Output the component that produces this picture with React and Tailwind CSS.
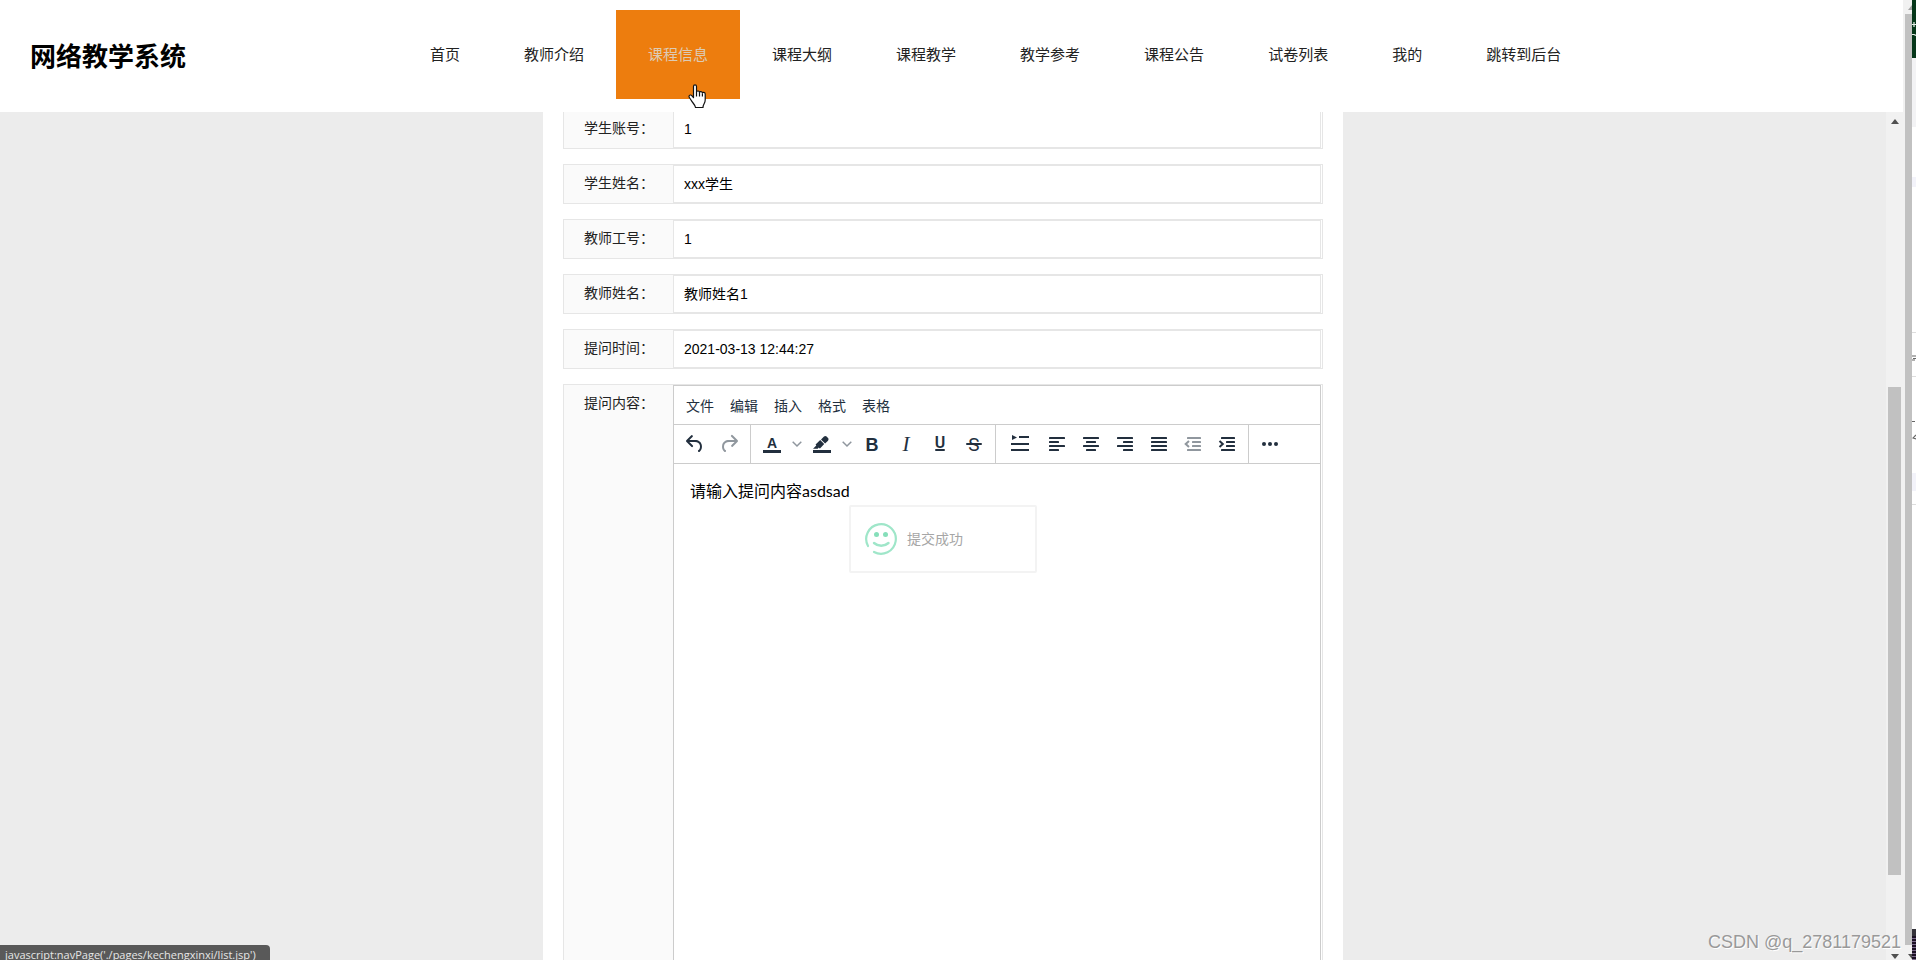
import { useState } from 'react';

const NAV = [
  '首页', '教师介绍', '课程信息', '课程大纲', '课程教学',
  '教学参考', '课程公告', '试卷列表', '我的', '跳转到后台',
];

const FIELDS = [
  { id: 'xueshengzhanghao', label: '学生账号：', value: '1' },
  { id: 'xueshengxingming', label: '学生姓名：', value: 'xxx学生' },
  { id: 'jiaoshigonghao',   label: '教师工号：', value: '1' },
  { id: 'jiaoshixingming',  label: '教师姓名：', value: '教师姓名1' },
  { id: 'tiwenshijian',     label: '提问时间：', value: '2021-03-13 12:44:27' },
];

const MENUS = ['文件', '编辑', '插入', '格式', '表格'];

/* Toolbar icons, all on a 24x24 grid */
function Icon({ children }) {
  return (
    <svg width="24" height="24" viewBox="0 0 24 24" fill="currentColor" aria-hidden="true">
      {children}
    </svg>
  );
}

// rows of [x, width], spaced 4 apart
function Lines({ rows }) {
  return rows.map(([x, w], i) => (
    <rect key={i} x={x} y={5 + i * 4} width={w} height="2" rx="0.6" />
  ));
}

const UndoIcon = () => (
  <Icon>
    <path d="M6.4 8H12c3.7 0 6.2 2 6.8 5.1.6 2.7-.4 5.6-2.3 6.8a1 1 0 0 1-1-1.8c1.1-.6 1.8-2.7 1.4-4.6-.5-2.1-2.1-3.5-4.9-3.5H6.4l3.3 3.3a1 1 0 1 1-1.4 1.4l-5-5a1 1 0 0 1 0-1.4l5-5a1 1 0 0 1 1.4 1.4L6.4 8z" />
  </Icon>
);

const RedoIcon = () => (
  <Icon>
    <path d="M17.6 10H12c-2.8 0-4.4 1.4-4.9 3.5-.4 2 .3 4 1.4 4.6a1 1 0 1 1-1 1.8c-2-1.2-2.9-4.1-2.3-6.8.6-3 3-5.1 6.8-5.1h5.6l-3.3-3.3a1 1 0 1 1 1.4-1.4l5 5a1 1 0 0 1 0 1.4l-5 5a1 1 0 0 1-1.4-1.4l3.3-3.3z" />
  </Icon>
);

const ColorIcon = () => (
  <Icon>
    <text x="12" y="16" textAnchor="middle" fontSize="14" fontWeight="700" fontFamily="Liberation Sans, sans-serif">A</text>
    <rect x="3" y="18" width="18" height="3" />
  </Icon>
);

const HighlightIcon = () => (
  <Icon>
    <rect x="3" y="18" width="18" height="3" />
    <path d="M7.7 16.7H3l3.3-3.3-.7-.8L10.2 8l4 4.1-4 4.2c-.2.2-.6.2-.8 0l-.6-.7-1.1 1.1zm5-7.5L11 7.4l3-2.9a2 2 0 0 1 2.6 0L18 6c.7.7.7 2 0 2.7l-2.9 2.9-1.8-1.8-.5-.6" />
  </Icon>
);

const BoldIcon = () => (
  <Icon>
    <text x="12" y="19" textAnchor="middle" fontSize="18" fontWeight="700" fontFamily="Liberation Sans, sans-serif">B</text>
  </Icon>
);

const ItalicIcon = () => (
  <Icon>
    <text x="12" y="19" textAnchor="middle" fontSize="21" fontStyle="italic" fontFamily="Liberation Serif, serif">I</text>
  </Icon>
);

const UnderlineIcon = () => (
  <Icon>
    <text x="12" y="16" textAnchor="middle" fontSize="16" fontWeight="600" fontFamily="Roboto, sans-serif">U</text>
    <rect x="7" y="17" width="10" height="2" rx="1" />
  </Icon>
);

const StrikeIcon = () => (
  <Icon>
    <text x="12" y="19" textAnchor="middle" fontSize="19" fontWeight="400" fontFamily="Roboto, sans-serif">S</text>
    <rect x="4" y="11" width="16" height="2" rx="1" />
  </Icon>
);

const FirstLineIcon = () => (
  <Icon>
    <path d="M4 3l5 2.5L4 8z" />
    <rect x="11" y="4" width="10" height="2" />
    <rect x="3" y="11" width="18" height="2" />
    <rect x="3" y="17" width="18" height="2" />
  </Icon>
);

const LeftIcon = () => <Icon><Lines rows={[[4, 16], [4, 10], [4, 16], [4, 10]]} /></Icon>;
const CenterIcon = () => <Icon><Lines rows={[[4, 16], [7, 10], [4, 16], [7, 10]]} /></Icon>;
const RightIcon = () => <Icon><Lines rows={[[4, 16], [10, 10], [4, 16], [10, 10]]} /></Icon>;
const JustifyIcon = () => <Icon><Lines rows={[[4, 16], [4, 16], [4, 16], [4, 16]]} /></Icon>;

const OutdentIcon = () => (
  <Icon>
    <Lines rows={[[6, 14], [11, 9], [11, 9], [6, 14]]} />
    <path d="M8 9l-3.3 3L8 15" fill="none" stroke="currentColor" strokeWidth="2" />
  </Icon>
);

const IndentIcon = () => (
  <Icon>
    <Lines rows={[[6, 14], [11, 9], [11, 9], [6, 14]]} />
    <path d="M4.5 9l3.3 3-3.3 3" fill="none" stroke="currentColor" strokeWidth="2" />
  </Icon>
);

const MoreIcon = () => (
  <Icon>
    <circle cx="6" cy="12" r="2" />
    <circle cx="12" cy="12" r="2" />
    <circle cx="18" cy="12" r="2" />
  </Icon>
);

const GROUPS = [
  [
    { label: '撤销', icon: UndoIcon },
    { label: '重做', icon: RedoIcon, disabled: true },
  ],
  [
    { label: '文字颜色', icon: ColorIcon, split: true },
    { label: '背景颜色', icon: HighlightIcon, split: true },
    { label: '粗体', icon: BoldIcon },
    { label: '斜体', icon: ItalicIcon },
    { label: '下划线', icon: UnderlineIcon },
    { label: '删除线', icon: StrikeIcon },
  ],
  [
    { label: '首行缩进', icon: FirstLineIcon, wide: true },
    { label: '左对齐', icon: LeftIcon },
    { label: '居中', icon: CenterIcon },
    { label: '右对齐', icon: RightIcon },
    { label: '两端对齐', icon: JustifyIcon },
    { label: '减少缩进', icon: OutdentIcon, disabled: true },
    { label: '增加缩进', icon: IndentIcon },
  ],
  [{ label: '更多', icon: MoreIcon }],
];

function ToolButton({ label, icon: Glyph, disabled, split, wide }) {
  return (
    <>
      <button
        type="button"
        aria-label={label}
        disabled={disabled}
        className={`flex h-[34px] items-center justify-center text-[#222f3e] disabled:text-[#222f3e]/50
          ${wide ? 'w-10' : 'w-[34px]'}`}
      >
        <Glyph />
      </button>
      {split && (
        <button type="button" aria-label={`${label}选项`} className="flex h-[34px] w-4 items-center justify-center text-[#8f969e]">
          <svg width="10" height="10" viewBox="0 0 10 10" fill="none" stroke="currentColor" strokeWidth="1.5" aria-hidden="true">
            <path d="M0.7 2.7L5 7l4.3-4.3" />
          </svg>
        </button>
      )}
    </>
  );
}

function Editor() {
  return (
    <div className="flex h-[800px] flex-1 flex-col border border-[#ccc] bg-white">
      <div className="flex h-[39px] shrink-0 items-center gap-4 border-b border-[#ccc] px-3 pt-px text-sm text-[#222f3e]">
        {MENUS.map((m) => (
          <button key={m} type="button">{m}</button>
        ))}
      </div>
      <div className="flex h-[39px] shrink-0 border-b border-[#ccc]">
        {GROUPS.map((group, i) => (
          <div key={i} className="flex items-center border-r border-[#ccc] px-1 last:border-r-0">
            {group.map((b) => <ToolButton key={b.label} {...b} />)}
          </div>
        ))}
      </div>
      <textarea
        id="tiwenneirong"
        defaultValue="请输入提问内容asdsad"
        className="w-full flex-1 resize-none px-4 py-[15px] font-[Lato,'Noto_Sans_CJK_SC',sans-serif] text-base text-black outline-none"
      />
    </div>
  );
}

function Toast() {
  return (
    <div role="status" className="absolute top-[393px] left-1/2 flex h-[68px] w-[188px] -translate-x-1/2 items-center gap-2.5 rounded-xs border-2 border-[#f3f3f3] bg-white px-3.5">
      <svg width="32" height="32" viewBox="0 0 32 32" fill="none" stroke="#9fe6c9" strokeLinecap="round" aria-hidden="true">
        <path d="M3 23A14.800 14.800 0 1 1 9 29" strokeWidth="2.200" />
        <circle cx="11.5" cy="11.5" r="2.5" fill="#86dfba" stroke="none" />
        <circle cx="20.5" cy="11.5" r="2.5" fill="#86dfba" stroke="none" />
        <path d="M9 20c4 3.600 10.500 3.600 14.500 0" strokeWidth="2.400" />
      </svg>
      <span className="text-sm text-[#a6a6a6]">提交成功</span>
    </div>
  );
}

function ScrollArrow({ down, className = '' }) {
  return (
    <svg width="8" height="5" viewBox="0 0 8 5" className={`shrink-0 ${className}`} aria-hidden="true">
      <path d={down ? 'M0 0h8L4 5z' : 'M0 5h8L4 0z'} fill="currentColor" />
    </svg>
  );
}

function HandCursor() {
  return (
    <svg width="19" height="25" viewBox="0 0 19 25" aria-hidden="true">
      <path
        d="M5.500 2.500c0-2.200 3-2.200 3 0v5.500c.3-1.500 3-1.300 3 .4.400-1.300 2.900-1.100 2.900.7.400-1.200 2.800-.9 2.800.9V16c0 3.500-2.200 4-2.200 7.500H7.500c0-2.500-3-4.500-4.500-7.500-.8-1.500-2-2.500-2-3.600 0-1.600 2-1.900 3-.6l1.500 1.900z"
        fill="#fff" stroke="#111" strokeWidth="1.200" strokeLinejoin="round"
      />
      <path d="M8.500 8v4.500M11.500 8.500v4M14.400 9.500v3" stroke="#111" strokeWidth="1.200" fill="none" />
    </svg>
  );
}

/* Sliver of the window that sits behind the browser */
function BackWindow() {
  return (
    <div className="flex w-1 shrink-0 flex-col bg-white" aria-hidden="true">
      <svg width="4" height="58" viewBox="0 0 4 58" className="shrink-0">
        <rect width="4" height="58" fill="#06371a" />
        <path d="M0 24.500h4M2 22v5M0 34.500h2l2 1" stroke="#e8f0ea" strokeWidth="1.200" fill="none" />
      </svg>
      <div className="h-[69px] shrink-0 bg-[#f3f3f5]" />
      <div className="h-[50px] shrink-0" />
      <div className="h-[10px] shrink-0 bg-[#f3f3fa]" />
      <svg width="4" height="320" viewBox="0 0 4 320" className="shrink-0">
        <path d="M0 145.500h4M0 189.500h4M0 317.500h4" stroke="#ddd" />
        <path d="M0 169h4M1 171.500h3M0 173h3M0 234.500h3M4 248l-3 3 3 1" stroke="#666" strokeWidth="1.200" fill="none" />
        <rect y="286" width="4" height="18" fill="#f3f3fa" />
      </svg>
      <div className="flex-1" />
      <div className="h-[7px] shrink-0 bg-[#35333b]" />
      <div className="h-6 shrink-0 bg-[repeating-linear-gradient(#1b1024_0_2px,#7b6a8c_2px_3px)]" />
    </div>
  );
}

export default function App() {
  const [active, setActive] = useState('课程信息');

  return (
    <div className="relative flex h-screen overflow-hidden bg-white font-['Liberation_Sans','Noto_Sans_CJK_SC',sans-serif]">
      <div className="flex min-w-0 flex-1 flex-col">
        <header className="relative z-10 flex h-28 shrink-0 items-center bg-white pl-[30px]">
          <h1 className="pt-0.5 text-[26px] font-bold whitespace-nowrap text-black">网络教学系统</h1>
          <nav className="ml-[212px] flex self-start pt-[10px]">
            {NAV.map((item) => (
              <div key={item} className="relative">
                <a
                  href="#"
                  onClick={() => setActive(item)}
                  className={`flex h-[89px] items-center px-8 pt-0.5 text-[15px] whitespace-nowrap
                    ${item === active ? 'bg-[#ed7d0e] text-[#dccbb5]' : 'text-[#222]'}`}
                >
                  {item}
                </a>
                {item === '课程信息' && (
                  <div className="pointer-events-none absolute top-[74px] left-[72px] z-10">
                    <HandCursor />
                  </div>
                )}
              </div>
            ))}
          </nav>
        </header>

        <div className="flex min-h-0 flex-1">
          <main className="relative min-w-0 flex-1 overflow-hidden bg-[#ececec]">
            <form className="mx-auto -mt-[3px] flex w-[800px] flex-col gap-[15px] bg-white px-5">
              {FIELDS.map((f) => (
                <div key={f.id} className="flex h-10 border border-[#e6e6e6] pr-px">
                  <label htmlFor={f.id} className="w-[109px] shrink-0 bg-[#fafafa] pl-5 text-sm leading-9 whitespace-nowrap text-[#222]">
                    {f.label}
                  </label>
                  <input
                    id={f.id}
                    type="text"
                    defaultValue={f.value}
                    className="min-w-0 flex-1 border border-[#e6e6e6] bg-white px-2.5 text-sm text-black outline-none"
                  />
                </div>
              ))}
              <div className="flex border border-[#e6e6e6] pr-px">
                <label htmlFor="tiwenneirong" className="w-[109px] shrink-0 bg-[#fafafa] pl-5 text-sm leading-9 whitespace-nowrap text-[#222]">
                  提问内容：
                </label>
                <Editor />
              </div>
            </form>
            <Toast />
          </main>

          {/* inner scrollbar */}
          <div className="flex w-[17px] shrink-0 flex-col items-center bg-[#f1f1f1] pt-[7px] pb-px text-[#505050]">
            <ScrollArrow />
            <div className="flex-[263]" />
            <div className="w-[13px] flex-[488] bg-[#c1c1c1]" />
            <div className="flex-[79]" />
            <ScrollArrow down />
          </div>
        </div>
      </div>

      {/* outer scrollbar, partly off the edge */}
      <div className="flex w-[9px] shrink-0 flex-col items-end overflow-hidden bg-[#f1f1f1]">
        <div className="flex h-[14px] w-[7px] shrink-0 items-center justify-start pl-[3px]">
          <ScrollArrow className="text-[#a3a3a3]" />
        </div>
        <div className="w-[7px] flex-1 bg-[#c1c1c1]" />
        <div className="flex h-[15px] w-[7px] shrink-0 items-end justify-start pb-px pl-[3px]">
          <ScrollArrow down className="text-[#505050]" />
        </div>
      </div>
      <BackWindow />

      {/* link target bubble */}
      <div className="absolute bottom-0 left-0 h-[15px] w-[270px] rounded-tr-sm bg-[#595959] pt-[2px] pl-[5px] font-['Open_Sans',sans-serif] text-[11px] leading-4 whitespace-nowrap text-[#e6e6e6]">
        javascript:navPage('./pages/kechengxinxi/list.jsp')
      </div>

      <div className="absolute right-[15px] bottom-[6px] text-lg leading-6 text-[#999] [text-shadow:1px_1px_0_#fff]">
        CSDN @q_2781179521
      </div>
    </div>
  );
}
